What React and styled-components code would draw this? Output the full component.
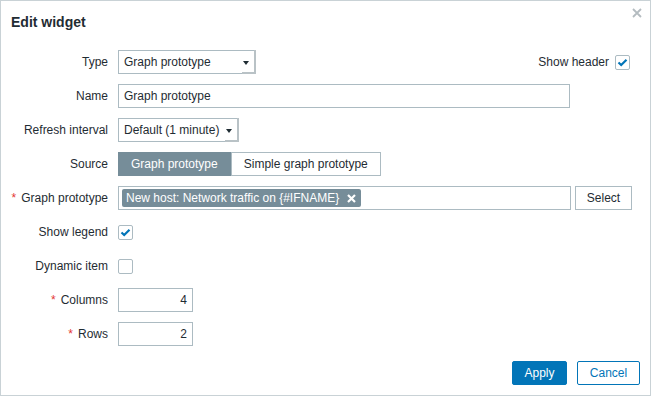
import styled, { createGlobalStyle } from "styled-components"

const GlobalStyle = createGlobalStyle`
    body {
        margin: 0;
        font-family: "Liberation Sans", Arial, sans-serif;
        font-size: 12px;
        color: #1f2c33;
        background: #fff;
    }
`

function Check() {
    return (
        <svg width="11" height="9" viewBox="0 0 11 9">
            <polyline points="1.5,4.5 4.2,7 9.5,1.8" fill="none" stroke="#0275b8" strokeWidth="2.2" />
        </svg>
    )
}

function Checkbox({ checked }) {
    return <Box>{checked && <Check />}</Box>
}

function Label({ required, children }) {
    return (
        <LabelCell>
            {required && <Star>*</Star>}
            {children}
        </LabelCell>
    )
}

export default function App() {
    return (
        <>
            <GlobalStyle />
            <Dialog>
                <Header>
                    <Title>Edit widget</Title>
                    <Close>
                        <svg width="10" height="10" viewBox="0 0 10 10">
                            <path d="M1 1 L9 9 M9 1 L1 9" stroke="#b4bcc0" strokeWidth="1.8" />
                        </svg>
                    </Close>
                </Header>
                <Form>
                    <Label>Type</Label>
                    <Row>
                        <Select width={138}>Graph prototype</Select>
                        <HeaderToggle>
                            Show header
                            <Checkbox checked />
                        </HeaderToggle>
                    </Row>

                    <Label>Name</Label>
                    <Row>
                        <Input width={452}>Graph prototype</Input>
                    </Row>

                    <Label>Refresh interval</Label>
                    <Row>
                        <Select width={121}>Default (1 minute)</Select>
                    </Row>

                    <Label>Source</Label>
                    <Row>
                        <Segments>
                            <Segment active>Graph prototype</Segment>
                            <Segment>Simple graph prototype</Segment>
                        </Segments>
                    </Row>

                    <Label required>Graph prototype</Label>
                    <Row>
                        <Multi>
                            <Chip>
                                New host: Network traffic on {"{#IFNAME}"}
                                <svg width="9" height="9" viewBox="0 0 9 9">
                                    <path d="M1 1 L8 8 M8 1 L1 8" stroke="#fff" strokeWidth="2.2" />
                                </svg>
                            </Chip>
                        </Multi>
                        <Button>Select</Button>
                    </Row>

                    <Label>Show legend</Label>
                    <Row>
                        <Checkbox checked />
                    </Row>

                    <Label>Dynamic item</Label>
                    <Row>
                        <Checkbox />
                    </Row>

                    <Label required>Columns</Label>
                    <Row>
                        <Input width={75} right>4</Input>
                    </Row>

                    <Label required>Rows</Label>
                    <Row>
                        <Input width={75} right>2</Input>
                    </Row>
                </Form>
                <Footer>
                    <Button primary>Apply</Button>
                    <Button outline>Cancel</Button>
                </Footer>
            </Dialog>
        </>
    )
}

const Dialog = styled.div`
    width: 651px;
    height: 396px;
    box-sizing: border-box;
    border: 1px solid #c9d2d6;
    background: #fff;
    display: flex;
    flex-direction: column;
    position: relative;
`
const Header = styled.div`
    padding: 10px 10px 0;
`
const Title = styled.h4`
    margin: 0;
    font-size: 14px;
    font-weight: bold;
    line-height: 22px;
    color: #1f2c33;
`
const Close = styled.div`
    position: absolute;
    top: 7px;
    right: 8px;
    line-height: 0;
`
const Form = styled.div`
    display: grid;
    grid-template-columns: 107px 1fr;
    grid-auto-rows: 24px;
    column-gap: 10px;
    row-gap: 10px;
    padding: 17px 18px 0 0;
`
const LabelCell = styled.div`
    display: flex;
    align-items: center;
    justify-content: flex-end;
    white-space: nowrap;
`
const Star = styled.span`
    color: #e33734;
    margin-right: 5px;
`
const Row = styled.div`
    display: flex;
    align-items: center;
    gap: 4px;
`
const Field = styled.div`
    box-sizing: border-box;
    height: 24px;
    border: 1px solid #acbbc2;
    background: #fff;
    display: flex;
    align-items: center;
    white-space: nowrap;
`
const Input = styled(Field)`
    width: ${p => p.width}px;
    padding: 0 5px;
    justify-content: ${p => (p.right ? "flex-end" : "flex-start")};
`
const Select = styled(Field)`
    width: ${p => p.width}px;
    padding: 0 5px;
    position: relative;

    &::after {
        content: "";
        position: absolute;
        right: 6px;
        top: 10px;
        border-left: 3px solid transparent;
        border-right: 3px solid transparent;
        border-top: 4px solid #1f2c33;
    }
    &::before {
        content: "";
        position: absolute;
        right: -1px;
        bottom: -1px;
        width: 12px;
        height: 22px;
        border-right: 2px solid #b9c2c6;
        border-bottom: 2px solid #b9c2c6;
    }
`
const HeaderToggle = styled.div`
    margin-left: auto;
    margin-right: 2px;
    display: flex;
    align-items: center;
    gap: 6px;
`
const Box = styled.div`
    box-sizing: border-box;
    width: 15px;
    height: 15px;
    border: 1px solid #acbbc2;
    border-radius: 2px;
    background: #fff;
    display: flex;
    align-items: center;
    justify-content: center;
`
const Segments = styled.div`
    display: flex;
`
const Segment = styled.div`
    box-sizing: border-box;
    height: 24px;
    padding: 0 12px;
    display: flex;
    align-items: center;
    border: 1px solid ${p => (p.active ? "#768d99" : "#acbbc2")};
    background: ${p => (p.active ? "#768d99" : "#fff")};
    color: ${p => (p.active ? "#fff" : "#1f2c33")};
`
const Multi = styled(Field)`
    width: 453px;
    padding: 0 3px;
`
const Chip = styled.div`
    height: 18px;
    padding: 0 5px 0 4px;
    display: flex;
    align-items: center;
    gap: 8px;
    background: #768d99;
    color: #fff;
    border-radius: 2px;
`
const Button = styled.div`
    box-sizing: border-box;
    height: 24px;
    padding: 0 11px;
    display: flex;
    align-items: center;
    justify-content: center;
    border: 1px solid ${p => (p.primary || p.outline ? "#0275b8" : "#acbbc2")};
    background: ${p => (p.primary ? "#0275b8" : "#fff")};
    color: ${p => (p.primary ? "#fff" : p.outline ? "#0275b8" : "#1f2c33")};
    border-radius: ${p => (p.primary || p.outline ? "2px" : "0")};
    width: ${p => (p.primary ? "55px" : p.outline ? "63px" : "57px")};
`
const Footer = styled.div`
    margin-top: auto;
    display: flex;
    justify-content: flex-end;
    gap: 10px;
    padding: 0 10px 10px;
`
